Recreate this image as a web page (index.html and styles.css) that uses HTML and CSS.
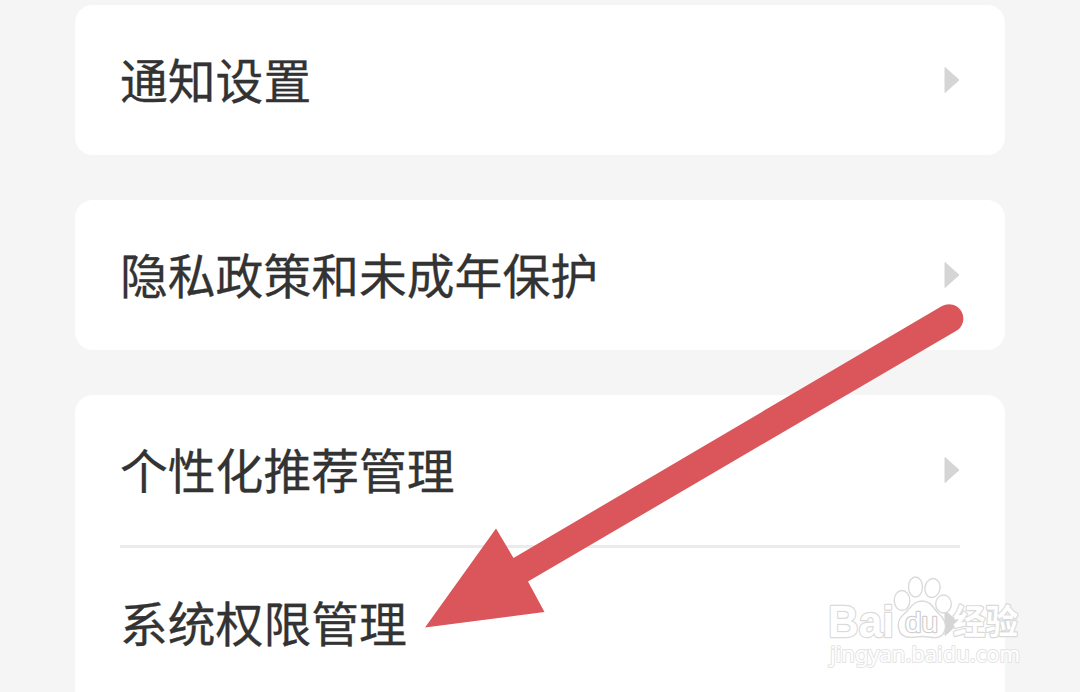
FILE: index.html
```html
<!DOCTYPE html>
<html lang="zh-CN">
<head>
<meta charset="utf-8">
<title>设置</title>
<link rel="stylesheet" href="styles.css">
</head>
<body>
<main class="settings">
  <section class="card">
    <div class="row"><span class="label">通知设置</span><svg class="chevron" viewBox="0 0 16 28"><path d="M1 1.500L15 14 1 26.500z"/></svg></div>
  </section>
  <section class="card">
    <div class="row"><span class="label">隐私政策和未成年保护</span><svg class="chevron" viewBox="0 0 16 28"><path d="M1 1.500L15 14 1 26.500z"/></svg></div>
  </section>
  <section class="card card-last">
    <div class="row"><span class="label">个性化推荐管理</span><svg class="chevron" viewBox="0 0 16 28"><path d="M1 1.500L15 14 1 26.500z"/></svg></div>
    <div class="divider"></div>
    <div class="row"><span class="label">系统权限管理</span><svg class="chevron" viewBox="0 0 16 28"><path d="M1 1.500L15 14 1 26.500z"/></svg></div>
  </section>
</main>
<svg class="overlay" viewBox="0 0 1080 692">
  <path class="arrow" d="M425 627.500L496 528.500 513.500 558 942 306A14.300 14.300 0 0 1 956 331L528 581.500 544.500 612z"/>
  <g class="watermark">
    <ellipse cx="902" cy="600.500" rx="7.800" ry="10"/>
    <ellipse cx="915.500" cy="587" rx="7" ry="10"/>
    <ellipse cx="932.500" cy="588" rx="7.500" ry="9.500" transform="rotate(12 932.500 588)"/>
    <ellipse cx="943.500" cy="604" rx="7.800" ry="9"/>
    <path d="M922 601C913 601 910 609 904 614C898 619 897 624 899 630C901 637 909 638 916 637Q922 636 929 637C937 639 943 637 945 630C947 623 944 618 938 613C933 608 931 601 922 601Z"/>
    <text class="latin" x="828" y="636.500" textLength="66" lengthAdjust="spacingAndGlyphs">Bai</text>
    <text class="du" x="905" y="631.500" textLength="33" lengthAdjust="spacingAndGlyphs">du</text>
    <text class="cjk" x="953" y="633.500" textLength="65" lengthAdjust="spacingAndGlyphs">经验</text>
    <text class="url" x="830" y="662" textLength="190" lengthAdjust="spacingAndGlyphs">jingyan.baidu.com</text>
  </g>
</svg>
</body>
</html>
```
FILE: styles.css
```css
body {
  margin: 0;
  height: 692px;
  overflow: hidden;
  background: #f5f5f5;
  font-family: "Noto Sans CJK SC", sans-serif;
}
.settings {
  display: flex;
  flex-direction: column;
  gap: 45px;
  padding: 5px 75px 0;
}
.card {
  padding: 0 45px;
  background: #fff;
  border-radius: 18px;
}
.card-last {
  padding-bottom: 45px;
}
.row {
  display: flex;
  align-items: center;
  justify-content: space-between;
  height: 150px;
}
.label {
  padding-bottom: 2px;
  color: #333;
  font-size: 47.800px;
  line-height: 70px;
  -webkit-text-stroke: 0.300px #333;
}
.chevron {
  width: 16px;
  height: 28px;
}
.chevron path {
  fill: #d5d5d5;
  stroke: #d5d5d5;
  stroke-width: 1;
  stroke-linejoin: round;
}
.divider {
  height: 3px;
  background: #ebebeb;
}
.overlay {
  position: absolute;
  top: 0;
  left: 0;
  width: 1080px;
  height: 692px;
}
.arrow {
  fill: #da565b;
}
.watermark {
  fill: #fff;
  stroke: #dadada;
  stroke-width: 1.400;
}
.watermark text {
  paint-order: stroke;
  stroke-width: 2.400;
  stroke-linejoin: round;
}
.watermark .latin {
  font: bold 45px "Liberation Sans", Arial, sans-serif;
}
.watermark .du {
  font: 28px "Liberation Sans", Arial, sans-serif;
  stroke: #cfcfcf;
}
.watermark .cjk {
  font: bold 34px "Noto Sans CJK SC", sans-serif;
}
.watermark .url {
  font: 22px "Noto Sans", sans-serif;
  stroke: #e4e4e4;
  stroke-width: 2;
}
```
